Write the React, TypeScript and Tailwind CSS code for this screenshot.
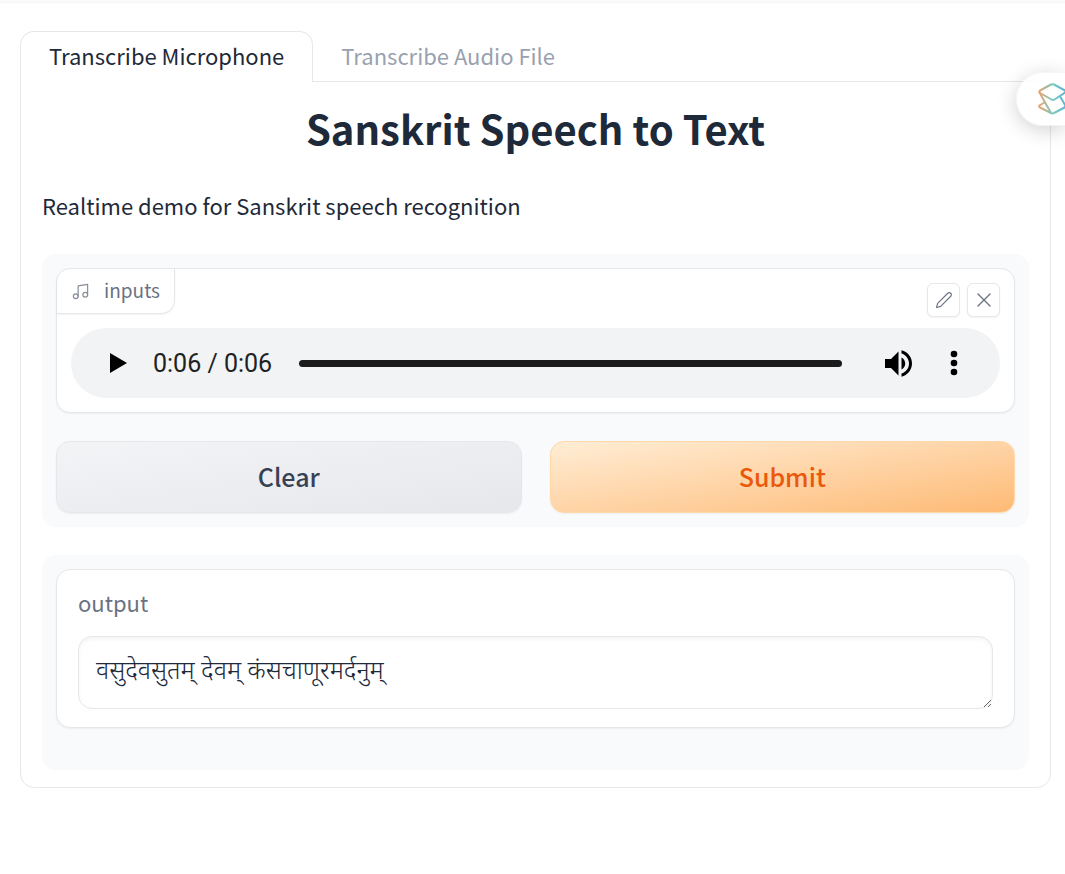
import { useState } from 'react';

const tabs = ['Transcribe Microphone', 'Transcribe Audio File'];

function MusicIcon() {
  return (
    <svg viewBox="0 0 24 24" className="h-[19px] w-[19px] opacity-80" fill="none" stroke="currentColor" strokeWidth="1.5" strokeLinecap="round" strokeLinejoin="round">
      <path d="M9 18V5l12-2v13" />
      <circle cx="6" cy="18" r="3" />
      <circle cx="18" cy="16" r="3" />
    </svg>
  );
}

function PencilIcon() {
  return (
    <svg viewBox="0 0 24 24" className="h-[18px] w-[18px]" fill="none" stroke="currentColor" strokeWidth="1.5" strokeLinecap="round" strokeLinejoin="round">
      <path d="M17 3a2.828 2.828 0 1 1 4 4L7.500 20.500 2 22l1.500-5.500L17 3z" />
    </svg>
  );
}

function CloseIcon() {
  return (
    <svg viewBox="0 0 14 14" className="h-[14px] w-[14px]" fill="none" stroke="currentColor" strokeWidth="1.4" strokeLinecap="round">
      <path d="M1 1l12 12M13 1L1 13" />
    </svg>
  );
}

function AudioPlayer() {
  const [position, setPosition] = useState(100);

  return (
    <div className="flex h-[70px] items-center rounded-full bg-[#f1f3f4] pr-7 pl-[29px] text-black">
      <button type="button" aria-label="Play" className="flex h-9 w-9 items-center justify-center">
        <svg viewBox="0 0 17 20" className="h-5 w-[17px]" fill="currentColor">
          <path d="M0 0v20l17-10z" />
        </svg>
      </button>
      <span className="ml-[17px] pt-px font-[Roboto] text-[25px] leading-[30px] whitespace-nowrap text-[#202124]">0:06 / 0:06</span>
      <input
        type="range"
        aria-label="Seek"
        min={0}
        max={100}
        value={position}
        onChange={(e) => setPosition(Number(e.target.value))}
        className="ml-[27px] h-[7px] min-w-0 flex-1 appearance-none rounded-full bg-[#1b1b1c] [&::-webkit-slider-thumb]:h-[7px] [&::-webkit-slider-thumb]:w-[7px] [&::-webkit-slider-thumb]:appearance-none"
      />
      <button type="button" aria-label="Mute" className="ml-[38px] flex h-9 w-9 items-center justify-center">
        <svg viewBox="3 3.200 18 17.600" className="h-[27px] w-[27px]" fill="currentColor">
          <path d="M3 9v6h4l5 5V4L7 9H3zm13.500 3c0-1.770-1.020-3.290-2.500-4.030v8.050c1.480-.730 2.500-2.250 2.500-4.020zM14 3.230v2.060c2.890.860 5 3.540 5 6.710s-2.110 5.850-5 6.710v2.060c4.010-.910 7-4.490 7-8.770s-2.990-7.860-7-8.770z" />
        </svg>
      </button>
      <button type="button" aria-label="More options" className="ml-5 flex h-9 w-9 items-center justify-center">
        <svg viewBox="0 0 8 26" className="h-[26px] w-2" fill="currentColor">
          <circle cx="4" cy="4" r="3.300" />
          <circle cx="4" cy="13" r="3.300" />
          <circle cx="4" cy="22" r="3.300" />
        </svg>
      </button>
    </div>
  );
}

export default function App() {
  const [active, setActive] = useState(0);
  const [output, setOutput] = useState('वसुदेवसुतम् देवम् कंसचाणूरमर्दनुम्');

  return (
    <div className="relative min-h-screen overflow-hidden bg-white font-['Noto_Sans_CJK_SC',sans-serif] text-[22px] leading-8 text-gray-800">
      <div className="h-[3px] border-b border-gray-100 bg-gray-50" />

      <main className="pt-7 pr-[14px] pl-5">
        {/* Tabs */}
        <div role="tablist" className="flex">
          {tabs.map((tab, i) => (
            <button
              key={tab}
              type="button"
              role="tab"
              aria-selected={active === i}
              onClick={() => setActive(i)}
              className={
                active === i
                  ? 'relative z-10 -mb-px h-[51px] rounded-t-[14px] border border-b-0 border-gray-200 bg-white px-7 pb-1'
                  : '-mb-px h-[51px] border-t border-transparent px-7 pb-1 text-gray-400'
              }
            >
              {tab}
            </button>
          ))}
        </div>

        <div className="rounded-b-[14px] rounded-tr-[14px] border border-gray-200 px-[21px] pb-[17px]">
          <h1 className="pt-4 text-center text-[40px] leading-[60px] font-bold">Sanskrit Speech to Text</h1>
          <p className="mt-[31px]">Realtime demo for Sanskrit speech recognition</p>

          {/* Input */}
          <section className="mt-[33px] rounded-[14px] bg-gray-50 p-[14px]">
            <div className="relative rounded-[14px] border border-gray-200 bg-white px-[14px] pt-[59px] pb-[14px] shadow-xs">
              <div className="absolute top-0 left-0 flex h-[45px] items-center gap-[14px] rounded-tl-[13px] rounded-br-[14px] border-r border-b border-gray-200 px-[14px] text-[19px] text-gray-500 shadow-xs">
                <MusicIcon />
                <span className="pb-[2px]">inputs</span>
              </div>
              <div className="absolute top-[14px] right-[14px] flex gap-[7px] text-gray-500">
                <button type="button" aria-label="Edit" className="flex h-[34px] w-[33px] items-center justify-center rounded-md border border-gray-200 bg-white shadow-xs">
                  <PencilIcon />
                </button>
                <button type="button" aria-label="Remove" className="flex h-[34px] w-[33px] items-center justify-center rounded-md border border-gray-200 bg-white shadow-xs">
                  <CloseIcon />
                </button>
              </div>
              <AudioPlayer />
            </div>

            <div className="mt-7 grid grid-cols-2 gap-7 text-[25px] font-medium">
              <button type="button" className="h-[72px] rounded-[14px] border border-gray-200 bg-linear-to-br from-gray-100 to-gray-200 pb-[2px] text-gray-700 shadow-xs">
                Clear
              </button>
              <button type="button" className="h-[72px] rounded-[14px] border border-[#fed7aa] bg-linear-to-br from-[#ffedd5] to-[#fdba74] pb-[2px] text-[#ea580c] shadow-xs">
                Submit
              </button>
            </div>
          </section>

          {/* Output */}
          <section className="mt-7 rounded-[14px] bg-gray-50 px-[14px] pt-[14px] pb-[42px]">
            <div className="rounded-[14px] border border-gray-200 bg-white px-[21px] pt-4 pb-[18px] shadow-xs">
              <label htmlFor="output" className="block text-gray-500">
                output
              </label>
              <textarea
                id="output"
                rows={1}
                value={output}
                onChange={(e) => setOutput(e.target.value)}
                className="mt-[18px] block h-[73px] w-full resize overflow-hidden rounded-[14px] border border-gray-200 px-[17px] py-[13px] font-['Noto_Sans',sans-serif] text-[25px] leading-[38px] font-light inset-shadow-sm"
              />
            </div>
          </section>
        </div>
      </main>

      {/* Floating extension button */}
      <button
        type="button"
        aria-label="Open assistant"
        className="absolute top-[72px] right-0 z-20 flex h-[54px] w-[49px] items-center rounded-l-full border border-r-0 border-gray-100 bg-white/85 pl-5 shadow-[0_4px_20px_rgba(0,0,0,0.18)]"
      >
        <svg viewBox="0 0 32 32" className="h-8 w-8 shrink-0" fill="none" stroke="url(#logo)" strokeWidth="2" strokeLinejoin="round" strokeLinecap="round">
          <defs>
            <linearGradient id="logo" gradientUnits="userSpaceOnUse" x1="1" y1="16" x2="30" y2="16">
              <stop offset="0" stopColor="#f3a06c" />
              <stop offset="0.500" stopColor="#78cbbb" />
              <stop offset="1" stopColor="#5bb0dc" />
            </linearGradient>
          </defs>
          <path d="M3 7.500L14 1.500Q15.500 .800 17 1.500L28 7.500Q29 8.500 28 9.500L17.500 16.500Q16 17.500 14.500 16.500L3 10Q1.500 9 3 7.500z" />
          <path d="M2.500 9.500L14 30" />
          <path d="M7.500 19.500L2.500 22.500Q1.500 23.500 3 24.500L14 30Q15.500 31 17 30L27.500 24.500Q29 23.500 28 22L23.500 14" />
        </svg>
      </button>
    </div>
  );
}
